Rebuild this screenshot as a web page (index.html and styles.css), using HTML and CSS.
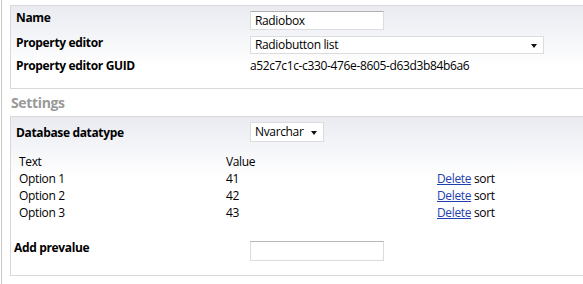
FILE: index.html
```html
<!DOCTYPE html>
<html lang="en">
<head>
    <meta charset="UTF-8">
    <title>Edit datatype</title>
    <link rel="stylesheet" href="styles.css">
</head>
<body>
    <div class="page">
        <div class="pane general">
            <div class="prop row-name">
                <span class="label">Name</span>
                <input class="text-input" type="text" value="Radiobox">
            </div>
            <div class="prop row-editor">
                <span class="label">Property editor</span>
                <span class="select wide">Radiobutton list</span>
            </div>
            <div class="prop row-guid">
                <span class="label">Property editor GUID</span>
                <span class="value">a52c7c1c-c330-476e-8605-d63d3b84b6a6</span>
            </div>
        </div>

        <h2 class="pane-title">Settings</h2>

        <div class="pane settings">
            <div class="prop row-dbtype">
                <span class="label">Database datatype</span>
                <span class="select small">Nvarchar</span>
            </div>

            <table class="prevalues">
                <tr>
                    <th class="col-text">Text</th>
                    <th class="col-value">Value</th>
                    <th></th>
                </tr>
                <tr>
                    <td>Option 1</td>
                    <td>41</td>
                    <td><a href="#">Delete</a> sort</td>
                </tr>
                <tr>
                    <td>Option 2</td>
                    <td>42</td>
                    <td><a href="#">Delete</a> sort</td>
                </tr>
                <tr>
                    <td>Option 3</td>
                    <td>43</td>
                    <td><a href="#">Delete</a> sort</td>
                </tr>
            </table>

            <div class="prop row-add">
                <span class="label">Add prevalue</span>
                <input class="text-input" type="text" value="">
            </div>
        </div>
    </div>
</body>
</html>
```
FILE: styles.css
```css
body {
    margin: 0;
    padding: 0;
    background-color: #fff;
    color: #000;
    font-family: "Open Sans", "DejaVu Sans", sans-serif;
    font-size: 12px;
    letter-spacing: -0.35px;
}
.page {
    margin-left: 1px;
    border-left: 1px solid #c8c8c8;
    min-height: 284px;
    padding-top: 5px;
    padding-left: 8px;
}
.pane {
    border: 1px solid #d9d9d9;
    border-right: none;
    background: linear-gradient(to bottom, #e9ebf1 0px, #ffffff 60px);
    padding: 5px 0 13px 5px;
}
.prop {
    display: grid;
    grid-template-columns: 234px auto;
    align-items: start;
}
.label {
    font-weight: bold;
    line-height: 15px;
    margin-top: -1px;
}
.row-name {
    height: 25px;
}
.row-editor {
    height: 23px;
}
.row-guid {
    height: 16px;
}
.value {
    white-space: nowrap;
    line-height: 15px;
    margin-top: -1px;
}
.text-input {
    width: 134px;
    height: 19px;
    box-sizing: border-box;
    border: 1px solid #dcdcdc;
    border-top-color: #b0b0b0;
    background: #fff;
    font-family: inherit;
    font-size: 12px;
    letter-spacing: inherit;
    padding: 0 4px;
    margin: 0;
}
.select {
    position: relative;
    display: block;
    box-sizing: border-box;
    height: 18px;
    line-height: 16px;
    border: 1px solid #dcdcdc;
    background: #fff;
    padding: 0 4px;
}
.select::after {
    content: "";
    position: absolute;
    right: 6px;
    top: 7px;
    border-left: 3px solid transparent;
    border-right: 3px solid transparent;
    border-top: 4px solid #111;
}
.select.wide {
    width: 294px;
}
.select.small {
    width: 74px;
    height: 20px;
    line-height: 18px;
}
.select.small::after {
    top: 8px;
}
.pane-title {
    margin: 6px 0 5px 1px;
    font-size: 14px;
    color: #999;
    font-weight: bold;
    line-height: 16px;
}
.settings {
    padding: 5px 0 15px 5px;
}
.row-dbtype {
    height: 25px;
}
.row-dbtype .label {
    margin-top: 3px;
}
.prevalues {
    border-collapse: collapse;
    margin: 6px 0 0 3px;
}
.prevalues th,
.prevalues td {
    padding: 0;
    height: 17px;
    font-weight: normal;
    text-align: left;
    vertical-align: middle;
    white-space: nowrap;
}
.col-text {
    width: 207px;
}
.col-value {
    width: 211px;
}
.prevalues a {
    color: #1f3fae;
}
.row-add {
    margin-top: 20px;
    height: 19px;
}
.row-add .label {
    margin-left: -2px;
}
.row-add .text-input {
    height: 20px;
    border-top-color: #b8b8b8;
}
```
